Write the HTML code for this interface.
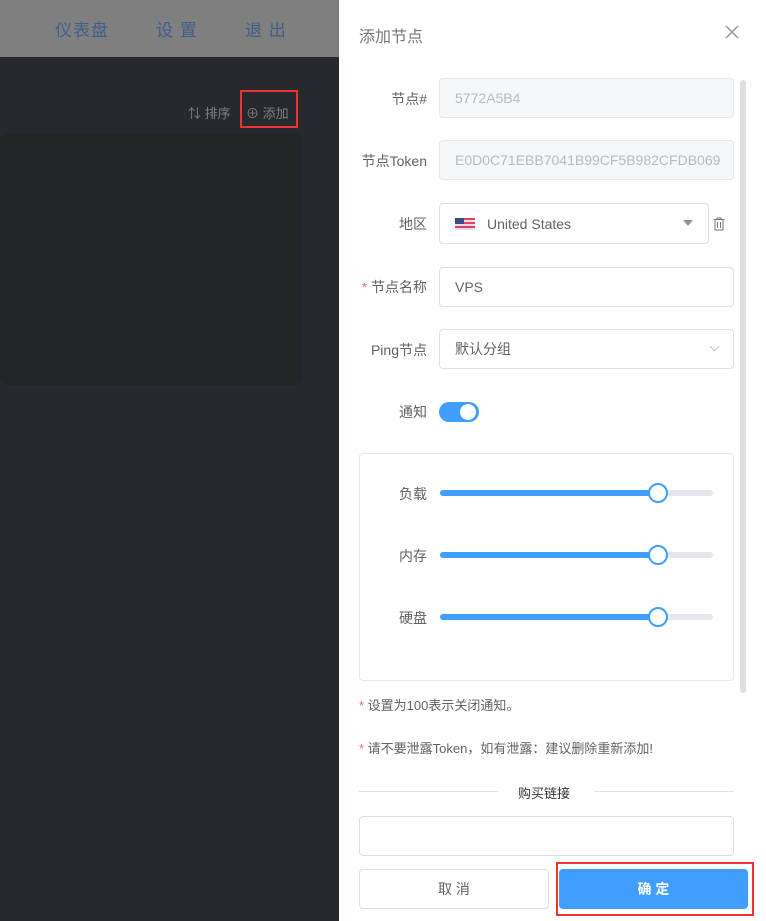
<!DOCTYPE html>
<html><head><meta charset="utf-8"><style>
*{margin:0;padding:0;box-sizing:border-box}
body{width:766px;height:921px;overflow:hidden;position:relative;font-family:"Liberation Sans","Noto Sans CJK SC",sans-serif;background:#26292d}
.a{position:absolute}
.top{left:0;top:0;width:339px;height:57px;background:#7f7f7f}
.nav{top:16px;font-size:17px;color:#3f5f8a;letter-spacing:1px}
.panel{left:339px;top:0;width:427px;height:921px;background:#fff}
.lbl{font-size:14px;color:#606266;text-align:right;width:88px;left:0}
.inp{border:1px solid #dcdfe6;border-radius:4px;font-size:14px;color:#606266;padding-left:15px;display:flex;align-items:center}
.dis{background:#f5f7fa;border-color:#e4e7ed;color:#b7bac0}
.track{height:6px;background:#e4e7ed;border-radius:3px;width:273px;left:101px}
.fill{height:6px;background:#409eff;border-radius:3px;width:218px;left:0;top:0}
.knob{width:20px;height:20px;border:2px solid #409eff;border-radius:50%;background:#fff;left:208px;top:-7px}
.note{font-size:13px;color:#606266;left:20px}
.note b{color:#f56c6c;font-weight:normal}
</style></head><body>
<div class="a top"></div>
<div class="a nav" style="left:55px">仪表盘</div>
<div class="a nav" style="left:156px">设 置</div>
<div class="a nav" style="left:245px">退 出</div>
<div class="a" style="left:0;top:133px;width:303px;height:252px;background:#232629;border-radius:8px"></div>
<div class="a" style="left:188px;top:103px;font-size:13px;color:#7d8186">⇅ 排序</div>
<div class="a" style="left:246px;top:103px;font-size:13px;color:#7d8186">⊕ 添加</div>
<div class="a" style="left:240px;top:90px;width:58px;height:38px;border:2px solid #e33"></div>

<div class="a panel">
<div class="a" style="left:20px;top:23px;font-size:16px;color:#72767b">添加节点</div>
<svg class="a" style="left:386px;top:25px" width="14" height="14" viewBox="0 0 14 14"><path d="M1 1L13 13M13 1L1 13" stroke="#909399" stroke-width="1.3"/></svg>
<div class="a" style="left:401px;top:80px;width:6px;height:613px;background:#dedfe1;border-radius:3px"></div>

<div class="a lbl" style="top:89px">节点#</div>
<div class="a inp dis" style="left:100px;top:78px;width:295px;height:40px">5772A5B4</div>
<div class="a lbl" style="top:151px">节点Token</div>
<div class="a inp dis" style="left:100px;top:140px;width:295px;height:40px">E0D0C71EBB7041B99CF5B982CFDB069</div>
<div class="a lbl" style="top:214px">地区</div>
<div class="a inp" style="left:100px;top:203px;width:270px;height:41px"><span style="display:inline-block;width:20px;height:12px;background:repeating-linear-gradient(#d46 0 2px,#f2dde0 2px 4px);position:relative;margin-right:12px"><span style="position:absolute;left:0;top:0;width:9px;height:6px;background:#3b4a8a"></span></span>United States<span style="position:absolute;right:15px;top:16px;border:5px solid transparent;border-top:6px solid #909399"></span></div>
<svg class="a" style="left:374px;top:217px" width="12" height="14" viewBox="0 0 12 14"><path d="M0.5 2.5H11.5M4 2.5V1H8V2.5M2 2.5V13H10V2.5M4.5 5V11M7.5 5V11" stroke="#777" stroke-width="1" fill="none"/></svg>
<div class="a lbl" style="top:277px"><span style="color:#f56c6c">* </span>节点名称</div>
<div class="a inp" style="left:100px;top:267px;width:295px;height:40px">VPS</div>
<div class="a lbl" style="top:340px">Ping节点</div>
<div class="a inp" style="left:100px;top:329px;width:295px;height:40px">默认分组<span style="position:absolute;right:15px;top:13px;width:7px;height:7px;border-right:1px solid #c0c4cc;border-bottom:1px solid #c0c4cc;transform:rotate(45deg)"></span></div>
<div class="a lbl" style="top:402px">通知</div>
<div class="a" style="left:100px;top:402px;width:40px;height:20px;background:#409eff;border-radius:10px"><div class="a" style="left:21px;top:2px;width:16px;height:16px;background:#fff;border-radius:50%"></div></div>

<div class="a" style="left:20px;top:453px;width:375px;height:228px;border:1px solid #e4e7ed;border-radius:4px"></div>
<div class="a lbl" style="top:484px">负载</div>
<div class="a track" style="top:490px"><div class="a fill"></div><div class="a knob"></div></div>
<div class="a lbl" style="top:546px">内存</div>
<div class="a track" style="top:552px"><div class="a fill"></div><div class="a knob"></div></div>
<div class="a lbl" style="top:608px">硬盘</div>
<div class="a track" style="top:614px"><div class="a fill"></div><div class="a knob"></div></div>

<div class="a note" style="top:695px"><b>*</b> 设置为100表示关闭通知。</div>
<div class="a note" style="top:738px"><b>*</b> 请不要泄露Token，如有泄露：建议删除重新添加!</div>
<div class="a" style="left:20px;top:791px;width:139px;height:1px;background:#dcdfe6"></div>
<div class="a" style="left:255px;top:791px;width:140px;height:1px;background:#dcdfe6"></div>
<div class="a" style="left:179px;top:783px;font-size:13px;color:#303133">购买链接</div>
<div class="a inp" style="left:20px;top:816px;width:375px;height:40px"></div>
<div class="a inp" style="left:20px;top:869px;width:190px;height:40px;justify-content:center;padding:0;color:#606266">取 消</div>
<div class="a" style="left:220px;top:869px;width:189px;height:40px;background:#409eff;border-radius:4px;color:#fff;font-size:14px;font-weight:bold;display:flex;align-items:center;justify-content:center">确 定</div>
<div class="a" style="left:217px;top:862px;width:198px;height:54px;border:2px solid #e33"></div>
</div>
</body></html>
